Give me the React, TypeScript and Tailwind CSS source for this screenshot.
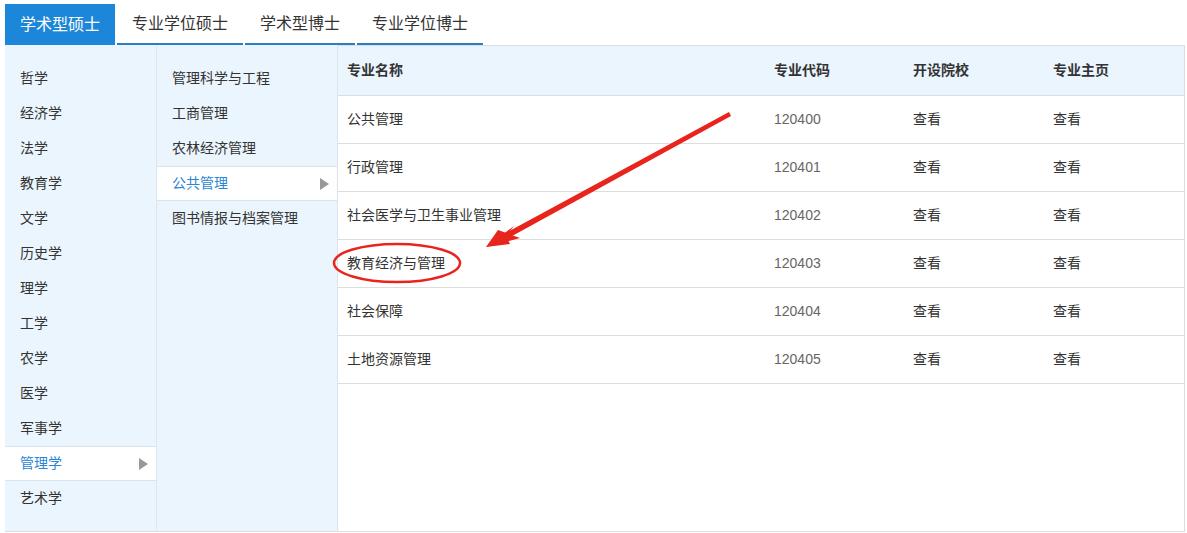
import React from "react";

const tabs = ["学术型硕士", "专业学位硕士", "学术型博士", "专业学位博士"];

const categories = [
  "哲学",
  "经济学",
  "法学",
  "教育学",
  "文学",
  "历史学",
  "理学",
  "工学",
  "农学",
  "医学",
  "军事学",
  "管理学",
  "艺术学",
];

const subjects = ["管理科学与工程", "工商管理", "农林经济管理", "公共管理", "图书情报与档案管理"];

const majors = [
  { name: "公共管理", code: "120400" },
  { name: "行政管理", code: "120401" },
  { name: "社会医学与卫生事业管理", code: "120402" },
  { name: "教育经济与管理", code: "120403" },
  { name: "社会保障", code: "120404" },
  { name: "土地资源管理", code: "120405" },
];

const Triangle = () => (
  <span className="w-0 h-0 border-y-[6px] border-y-transparent border-l-[9px] border-l-[#999]" />
);

export default function App() {
  return (
    <div
      className="relative w-[1187px] h-[533px] bg-white text-[#333] pl-[5px] pt-[4px]"
      style={{ fontFamily: '"Liberation Sans", "Noto Sans CJK SC", sans-serif' }}
    >
      {/* Tabs */}
      <div className="flex gap-[2px] h-[41px]">
        {tabs.map((t, i) => (
          <div
            key={t}
            className={`px-[15px] flex items-center text-[16px] ${
              i === 0 ? "bg-[#1c86d9] text-white" : "text-[#333] border-b-2 border-[#2a7fc4]"
            }`}
          >
            {t}
          </div>
        ))}
      </div>

      {/* Panel */}
      <div className="flex w-[1180px] h-[487px] border-b border-[#ddd] text-[14px]">
        {/* Categories */}
        <div className="w-[152px] bg-[#ebf5fd] border-r border-[#dde6ee] pt-[16px]">
          {categories.map((c) => {
            const active = c === "管理学";
            return (
              <div
                key={c}
                className={`h-[35px] flex items-center justify-between pl-[15px] pr-[8px] ${
                  active ? "bg-white text-[#2b85d4] border-y border-[#dde3ea]" : ""
                }`}
              >
                <span>{c}</span>
                {active && <Triangle />}
              </div>
            );
          })}
        </div>

        {/* Subjects */}
        <div className="w-[181px] bg-[#ebf5fd] border-r border-[#dde3ea] pt-[16px]">
          {subjects.map((s) => {
            const active = s === "公共管理";
            return (
              <div
                key={s}
                className={`h-[35px] flex items-center justify-between pl-[15px] pr-[8px] ${
                  active ? "bg-white text-[#2b85d4] border-y border-[#dde3ea]" : ""
                }`}
              >
                <span>{s}</span>
                {active && <Triangle />}
              </div>
            );
          })}
        </div>

        {/* Table */}
        <div className="flex-1 border-t border-r border-[#ddd] bg-white">
          <div className="flex h-[50px] items-center bg-[#eaf5fd] border-b border-[#ddd] font-bold pl-[9px]">
            <div className="w-[427px]">专业名称</div>
            <div className="w-[139px]">专业代码</div>
            <div className="w-[140px]">开设院校</div>
            <div>专业主页</div>
          </div>
          {majors.map((m) => (
            <div key={m.code} className="flex h-[48px] items-center border-b border-[#ddd] pl-[9px]">
              <div className="w-[427px]">{m.name}</div>
              <div className="w-[139px] text-[#666]">{m.code}</div>
              <div className="w-[140px]">查看</div>
              <div>查看</div>
            </div>
          ))}
        </div>
      </div>

      {/* Annotation: arrow and ellipse */}
      <svg className="absolute left-0 top-0 pointer-events-none" width="1187" height="533">
        <polygon points="729,112 731,116 505,240 500,236" fill="#e8241c" />
        <polygon points="486,247 514,226 506,236 510,244" fill="#e8241c" />
        <polygon points="486,247 498,230 520,238" fill="#e8241c" />
        <ellipse cx="397" cy="263" rx="63" ry="19" fill="none" stroke="#e8241c" strokeWidth="2.5" />
      </svg>
    </div>
  );
}
